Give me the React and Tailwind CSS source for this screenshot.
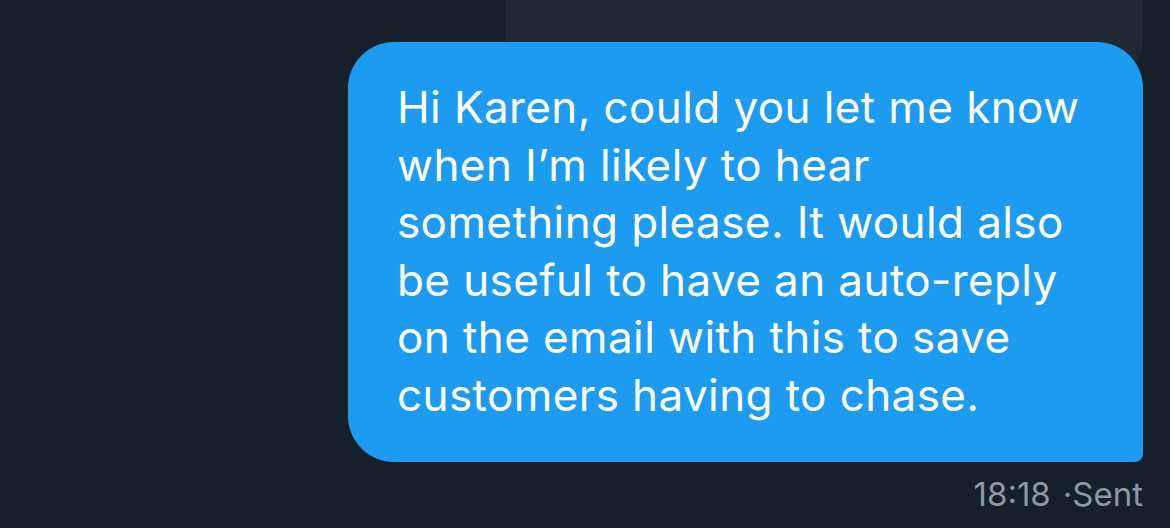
export default function App() {
  const lines = [
    "Hi Karen, could you let me know",
    "when I’m likely to hear",
    "something please. It would also",
    "be useful to have an auto-reply",
    "on the email with this to save",
    "customers having to chase.",
  ];
  return (
    <div className="w-[1170px] h-[528px] bg-[#16202a] overflow-hidden flex flex-col items-end pr-[27px]" style={{ fontFamily: "Inter, Roboto, 'Liberation Sans', sans-serif" }}>
      <div className="w-[637px] h-[80px] -mb-[38px] bg-[#202833] rounded-br-[40px]"></div>
      <div className="relative w-[795px] h-[420px] bg-[#1d9bf0] rounded-tl-[46px] rounded-tr-[46px] rounded-bl-[46px] rounded-br-[8px] pl-[49px] pt-[37px]">
        {lines.map((l, i) => (
          <div key={i} className="text-white text-[44px] leading-[57.5px] whitespace-nowrap tracking-[0.4px]">{l}</div>
        ))}
      </div>
      <div className="mt-[12px] text-[#8b98a5] text-[33px] leading-[40px] flex items-center gap-[12px]">
        <span>18:18</span>
        <span>·Sent</span>
      </div>
    </div>
  );
}
